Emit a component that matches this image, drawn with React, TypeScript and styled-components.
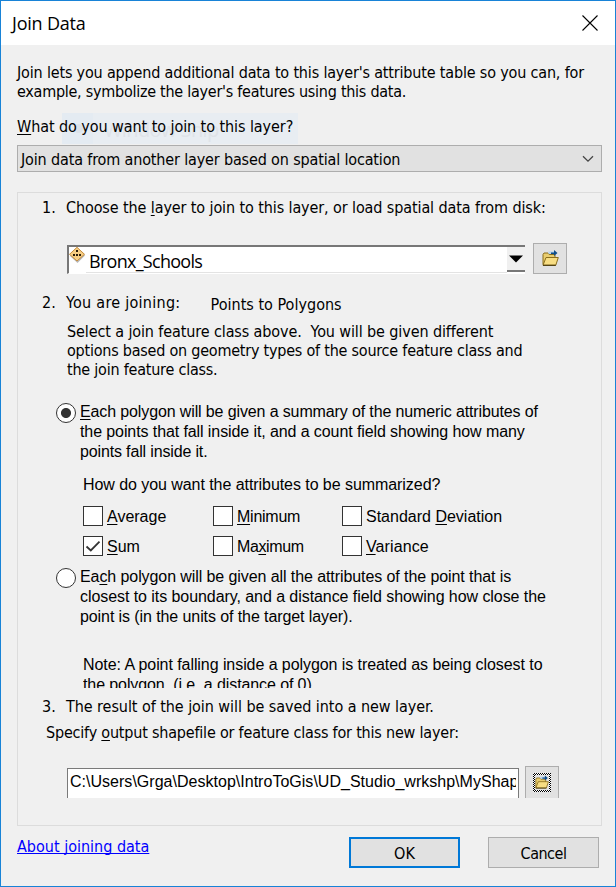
import React from "react";
import styled, { createGlobalStyle, css } from "styled-components";

const GlobalStyle = createGlobalStyle`
  * { box-sizing: border-box; }
  body { margin: 0; background: #f0f0f0; }
`;

const tahoma = css`
  font-family: "DejaVu Sans Condensed", "DejaVu Sans", sans-serif;
  font-stretch: condensed;
  font-size: 16px;
  line-height: 19px;
`;
const arial = css`
  font-family: "Liberation Sans", Arial, sans-serif;
  font-size: 16px;
  line-height: 20px;
`;

const Dialog = styled.div`
  ${tahoma}
  width: 616px;
  height: 887px;
  display: flex;
  flex-direction: column;
  overflow: hidden;
  color: #000;
  background: #f0f0f0;
  border: 1px solid #1883d7;
`;
const TitleBar = styled.header`
  flex: none;
  height: 44px;
  display: flex;
  align-items: center;
  justify-content: space-between;
  padding: 0 17px 0 11px;
  background: #fff;
`;
const Title = styled.h1`
  margin: 0;
  font: 400 18px/24px "Open Sans", sans-serif;
  letter-spacing: -0.2px;
`;
const CloseButton = styled.button`
  width: 16px;
  height: 16px;
  margin-bottom: 1px;
  padding: 0;
  border: 0;
  background: none;
  svg { display: block; }
`;
const Body = styled.main`
  flex: 1;
  display: flex;
  flex-direction: column;
  padding: 18px 13px 0 16px;
`;
const Line = styled.div<{ $ls?: number }>`
  white-space: pre;
  letter-spacing: ${(p) => p.$ls ?? 0}px;
`;
const Key = styled.span`
  text-decoration: underline;
  text-decoration-thickness: 1px;
  text-underline-offset: 2px;
  text-decoration-skip-ink: none;
`;
const Question = styled.div`
  position: relative;
  height: 28px;
  margin-top: 16px;
`;
const Ghost = styled.div`
  position: absolute;
  left: 45px;
  top: -4px;
  width: 236px;
  height: 31px;
  padding-left: 42px;
  overflow: hidden;
  font: 20px/34px "Open Sans", sans-serif;
  letter-spacing: -0.6px;
  white-space: nowrap;
  color: #dfe3e8;
  background: linear-gradient(90deg, #e4ebf2 31px, #e8edf2 31px);
`;
const GhostDot = styled.span`
  position: absolute;
  left: 12px;
  top: 11px;
  width: 9px;
  height: 9px;
  border-radius: 50%;
  background: #dce2e9;
`;
const QuestionText = styled(Line)`
  position: relative;
`;
const Select = styled.div`
  flex: none;
  height: 27px;
  display: flex;
  align-items: center;
  justify-content: space-between;
  padding: 1px 7px 0 3px;
  border: 1px solid #adadad;
  background: #e1e1e1;
`;
const Group = styled.section`
  flex: none;
  height: 634px;
  margin-top: 20px;
  padding: 5px 0 0 24px;
  display: flex;
  flex-direction: column;
  border: 1px solid #dcdcdc;
`;
const Step = styled.div<{ $top?: number }>`
  display: flex;
  margin-top: ${(p) => p.$top ?? 0}px;
`;
const StepNumber = styled.span`
  width: 24px;
`;
const JoinType = styled(Line)`
  margin: 2px 0 -2px 30px;
`;
const LayerRow = styled.div`
  height: 31px;
  display: flex;
  align-items: center;
  gap: 8px;
  margin: 26px 0 0 25px;
`;
const LayerCombo = styled.div`
  width: 458px;
  height: 29px;
  margin-top: 1px;
  display: flex;
  border-top: 2px solid #777;
  border-left: 2px solid #777;
  border-bottom: 1px solid #fff;
  background: #fff;
`;
const LayerIcon = styled.svg`
  width: 17px;
  height: 17px;
  flex: none;
`;
const LayerName = styled.div`
  flex: 1;
  padding-left: 3px;
  font: 18px/29px "Open Sans", sans-serif;
  letter-spacing: -0.72px;
  border-bottom: 1px solid #e3e3e3;
`;
const DropArrow = styled.div`
  width: 18px;
  height: 25px;
  padding-top: 2px;
  display: flex;
  align-items: center;
  justify-content: center;
  background: #f0f0f0;
  border-bottom: 2px solid #777;
`;
const BrowseButton = styled.button<{ $cut?: boolean }>`
  width: 34px;
  height: ${(p) => (p.$cut ? 32 : 31)}px;
  padding: 0;
  display: flex;
  align-items: center;
  justify-content: center;
  background: #e1e1e1;
  border: 1px solid #adadad;
  ${(p) => p.$cut && css`border-bottom: 0;`}
`;
const FocusRing = styled.span`
  width: 18px;
  height: 19px;
  display: flex;
  align-items: center;
  justify-content: center;
  background: repeating-conic-gradient(#000 0 25%, #fff 0 50%) 0 0 / 2px 2px;
`;
const FocusInner = styled.span`
  width: 14px;
  height: 15px;
  display: flex;
  align-items: center;
  justify-content: center;
  background: #e1e1e1;
`;
const Summary = styled.div`
  margin: 10px 0 0 25px;
`;
const Option = styled.label<{ $top: number }>`
  ${arial}
  display: flex;
  gap: 4px;
  margin: ${(p) => p.$top}px 0 0 14px;
`;
const Radio = styled.span<{ $on?: boolean }>`
  flex: none;
  width: 20px;
  height: 20px;
  margin-top: 1px;
  border: 1px solid #333;
  border-radius: 50%;
  background: ${(p) => (p.$on ? "radial-gradient(circle, #333 4.6px, #fff 5.4px)" : "#fff")};
`;
const Prompt = styled(Line)`
  ${arial}
  margin: 13px 0 11px 41px;
`;
const CheckGrid = styled.div`
  ${arial}
  display: grid;
  grid-template-columns: 130px 129px auto;
  grid-auto-rows: 20px;
  row-gap: 10px;
  margin-left: 41px;
`;
const Check = styled.label`
  display: flex;
  gap: 4px;
  line-height: 22px;
`;
const CheckBox = styled.span`
  width: 20px;
  height: 20px;
  border: 1px solid #333;
  background: #fff;
  svg { display: block; }
`;
const Note = styled.div`
  ${arial}
  height: 33px;
  overflow: hidden;
  margin: 28px 0 0 41px;
`;
const Specify = styled(Line)`
  margin: 7px 0 0 4px;
`;
const OutputRow = styled.div`
  height: 32px;
  display: flex;
  gap: 6px;
  align-items: flex-end;
  margin: 24px 0 0 25px;
`;
const PathField = styled.div`
  ${arial}
  width: 452px;
  height: 30px;
  padding: 3px 2px 0;
  border: 1px solid #7a7a7a;
  border-bottom: 0;
  background: #fff;
`;
const PathText = styled(Line)`
  overflow: hidden;
`;
const Footer = styled.footer`
  display: flex;
  padding-top: 11px;
`;
const HelpLink = styled.a`
  flex: 1;
  color: #0000ff;
  text-decoration: underline;
  text-decoration-thickness: 1px;
  text-underline-offset: 1px;
  text-decoration-skip-ink: none;
`;
const ActionButton = styled.button<{ $primary?: boolean; $ls: number }>`
  ${tahoma}
  width: 111px;
  height: 31px;
  margin-right: ${(p) => (p.$primary ? 28 : 3)}px;
  padding: 2px 0 0;
  color: #000;
  letter-spacing: ${(p) => p.$ls}px;
  background: #e1e1e1;
  border: ${(p) => (p.$primary ? "2px solid #0078d7" : "1px solid #adadad")};
`;

const FolderIcon = () => (
  <svg width="17" height="17" viewBox="0 0 17 17">
    <path d="M1 14.5V4.500L2 3h4l1.200 1.500H13V8" fill="#e9cd6e" stroke="#8a6d1b" />
    <path d="M1 15.200L4 7.500h12.300l-2.500 7.700z" fill="#f7dd83" stroke="#8a6d1b" />
    <path d="M1 15.300h12.800" stroke="#3f3108" />
    <path d="M7.500 4V2.500H12" fill="none" stroke="#b6d4ed" strokeWidth="2" />
    <path d="M9 2.500h3V0l3.500 3L12 6V4H9z" fill="#0d4d8c" />
  </svg>
);

const CheckMark = () => (
  <svg width="18" height="18" viewBox="0 0 18 18">
    <path d="M2.500 9.500l4.300 4L15.500 4.600" fill="none" stroke="#333" strokeWidth="1.8" />
  </svg>
);

export default function App() {
  return (
    <Dialog>
      <GlobalStyle />
      <TitleBar>
        <Title>Join Data</Title>
        <CloseButton aria-label="Close">
          <svg width="16" height="16" viewBox="0 0 16 16">
            <path d="M.5.5l15 15M15.5.5l-15 15" stroke="#000" strokeWidth="1.1" />
          </svg>
        </CloseButton>
      </TitleBar>
      <Body>
        <Line $ls={-0.17}>Join lets you append additional data to this layer's attribute table so you can, for</Line>
        <Line $ls={-0.26}>example, symbolize the layer's features using this data.</Line>
        <Question>
          <Ghost aria-hidden="true"><GhostDot />Window Snip</Ghost>
          <QuestionText $ls={-0.07}><Key>W</Key>hat do you want to join to this layer?</QuestionText>
        </Question>
        <Select>
          <Line $ls={-0.15}>Join data from another layer based on spatial location</Line>
          <svg width="12" height="8" viewBox="0 0 12 8">
            <path d="M1 1.200l5 5 5-5" fill="none" stroke="#444" strokeWidth="1.3" />
          </svg>
        </Select>
        <Group>
          <Step>
            <StepNumber>1.</StepNumber>
            <Line $ls={-0.105}>Choose the <Key>l</Key>ayer to join to this layer, or load spatial data from disk:</Line>
          </Step>
          <LayerRow>
            <LayerCombo>
              <LayerIcon viewBox="0 0 17 17">
                <path d="M8.500 1.500L16 8.500l-7.500 7.500L1 9z" fill="#b9b9b9" />
                <path d="M8 .300L15.500 7.300 8 14 .500 7.300z" fill="#f7ce83" stroke="#c58c3d" />
                <path d="M7 3h2v2H7zM4 7h2v2H4zM7 7h2v2H7zM10 7h2v2h-2z" fill="#2b1d0a" />
              </LayerIcon>
              <LayerName>Bronx_Schools</LayerName>
              <DropArrow>
                <svg width="14" height="8" viewBox="0 0 14 8"><path d="M0 .5h14L7 7.500z" fill="#000" /></svg>
              </DropArrow>
            </LayerCombo>
            <BrowseButton aria-label="Browse for layer"><FolderIcon /></BrowseButton>
          </LayerRow>
          <Step $top={19}>
            <StepNumber>2.</StepNumber>
            <Line $ls={0.28}>You are joining:</Line>
            <JoinType $ls={0.02}>Points to Polygons</JoinType>
          </Step>
          <Summary>
            <Line $ls={-0.11}>Select a join feature class above.  You will be given different</Line>
            <Line $ls={-0.225}>options based on geometry types of the source feature class and</Line>
            <Line $ls={-0.22}>the join feature class.</Line>
          </Summary>
          <Option $top={23}>
            <Radio $on />
            <div>
              <Line $ls={-0.125}><Key>E</Key>ach polygon will be given a summary of the numeric attributes of</Line>
              <Line $ls={-0.095}>the points that fall inside it, and a count field showing how many</Line>
              <Line $ls={-0.15}>points fall inside it.</Line>
            </div>
          </Option>
          <Prompt $ls={-0.06}>How do you want the attributes to be summarized?</Prompt>
          <CheckGrid>
            <Check><CheckBox /><Line><Key>A</Key>verage</Line></Check>
            <Check><CheckBox /><Line $ls={-0.25}><Key>M</Key>inimum</Line></Check>
            <Check><CheckBox /><Line>Standard <Key>D</Key>eviation</Line></Check>
            <Check><CheckBox><CheckMark /></CheckBox><Line><Key>S</Key>um</Line></Check>
            <Check><CheckBox /><Line $ls={-0.4}>Ma<Key>x</Key>imum</Line></Check>
            <Check><CheckBox /><Line $ls={0.1}><Key>V</Key>ariance</Line></Check>
          </CheckGrid>
          <Option $top={11}>
            <Radio />
            <div>
              <Line $ls={-0.085}>Ea<Key>c</Key>h polygon will be given all the attributes of the point that is</Line>
              <Line $ls={-0.065}>closest to its boundary, and a distance field showing how close the</Line>
              <Line $ls={-0.09}>point is (in the units of the target layer).</Line>
            </div>
          </Option>
          <Note>
            <Line $ls={-0.07}>Note: A point falling inside a polygon is treated as being closest to</Line>
            <Line $ls={-0.1}>the polygon. (i.e. a distance of 0)</Line>
          </Note>
          <Step $top={9}>
            <StepNumber>3.</StepNumber>
            <Line $ls={-0.06}>The result of the join will be saved into a new layer.</Line>
          </Step>
          <Specify $ls={-0.2}>Specify <Key>o</Key>utput shapefile or feature class for this new layer:</Specify>
          <OutputRow>
            <PathField>
              <PathText $ls={0.02}>C:\Users\Grga\Desktop\IntroToGis\UD_Studio_wrkshp\MyShap</PathText>
            </PathField>
            <BrowseButton $cut aria-label="Browse for output">
              <FocusRing><FocusInner><FolderIcon /></FocusInner></FocusRing>
            </BrowseButton>
          </OutputRow>
        </Group>
        <Footer>
          <HelpLink>About joining data</HelpLink>
          <ActionButton $primary $ls={0}>OK</ActionButton>
          <ActionButton $ls={-0.5}>Cancel</ActionButton>
        </Footer>
      </Body>
    </Dialog>
  );
}
